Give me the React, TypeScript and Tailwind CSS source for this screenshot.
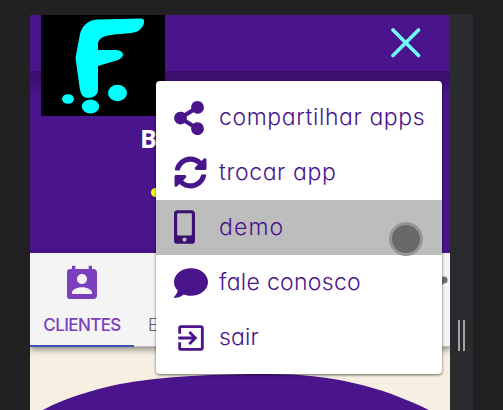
import type { ReactNode } from "react";
import { FaShareAlt, FaSyncAlt, FaMobileAlt, FaComment } from "react-icons/fa";
import { MdExitToApp, MdPermContactCalendar } from "react-icons/md";

function Logo() {
  return (
    <svg viewBox="0 0 124 101" className="block h-[101px] w-[124px] bg-black" fill="#00ffff">
      <path d="M56 4.5 Q80 4 99 3.5 C105 3 104 10 99 14.5 C95 19 84 18 70 20 C62 21 57 24 57 29 L57 35 L75 35 C84 36 84 42 77 45 L57 51 L57 75 C57 80 52 83 47 83 C41 83 39 78 38 68 L34.5 43 L39 19 C41 11 47 5 56 4.5Z" />
      <ellipse cx="27" cy="84" rx="6" ry="4.8" />
      <ellipse cx="49.5" cy="91.5" rx="8.7" ry="7" />
      <ellipse cx="76.5" cy="78" rx="9.5" ry="8.2" />
    </svg>
  );
}

function MenuItem({ icon, label, active, spacing }: { icon: ReactNode; label: string; active?: boolean; spacing: string }) {
  return (
    <div className={`flex h-[55px] items-center pl-[18px] text-[#4a148c] ${active ? "bg-[#bdbdbd]" : ""}`}>
      <span className="flex w-[45px] items-center">{icon}</span>
      <span className={`whitespace-nowrap text-[23px] leading-none font-light ${spacing}`}>{label}</span>
    </div>
  );
}

function Menu() {
  return (
    <div className="absolute top-[66px] left-[126px] h-[293px] w-[286px] rounded-[4px] bg-white pt-[9px] shadow-[0_1px_3px_rgba(0,0,0,0.6)]">
      <MenuItem icon={<FaShareAlt className="h-[34px] w-[30px]" />} label="compartilhar apps" spacing="tracking-[0.6px]" />
      <MenuItem icon={<FaSyncAlt className="size-[33px]" />} label="trocar app" spacing="tracking-[0.6px]" />
      <MenuItem active icon={<FaMobileAlt className="mb-[2px] h-[34px] w-[21px] text-[#3b1070]" />} label="demo" spacing="tracking-[1.1px]" />
      <MenuItem icon={<FaComment className="size-[34px]" />} label="fale conosco" spacing="tracking-[0.3px]" />
      <MenuItem icon={<MdExitToApp className="size-[34px]" />} label="sair" spacing="tracking-[0.1px]" />
      <div className="absolute top-[141px] left-[233px] size-[34px] rounded-full border-[3px] border-[#969696] bg-[#696969]" />
    </div>
  );
}

export default function App() {
  return (
    <div className="flex h-[410px] w-[503px] overflow-hidden bg-[#212122] pt-[15px] pl-[30px] font-['Inter','Open_Sans',sans-serif] [font-feature-settings:'cv11']">
      <main className="relative h-[395px] w-[420px] shrink-0 overflow-hidden bg-[#f7efe2]">
        <header className="flex h-[238px] flex-col bg-[#4a148c] bg-[linear-gradient(#4a148c_56px,#3a0f6c_56px,#3d1073_65px,#4a148c_82px)]">
          <div className="flex h-[101px] items-start justify-between pl-[11px]">
            <Logo />
            <svg viewBox="0 0 30 30" className="mt-[13px] mr-[29px] size-[30px]" stroke="#70ffff" strokeWidth="3.6" strokeLinecap="round">
              <path d="M2 2 27.5 27.5M27.5 2 2 27.5" />
            </svg>
          </div>
          <div className="pt-[9px] pl-[110px] font-['Open_Sans'] text-[25px] leading-[26px] font-bold text-white">B</div>
          <div className="mt-[37px] ml-[121px] size-[9px] rounded-full bg-[#fff700]" />
        </header>
        <nav className="flex h-[94px] border-b border-[#bdbdbd] bg-[#f4f4f4] text-[17px] font-medium shadow-[0_3px_6px_rgba(0,0,0,0.4)]">
          <div className="-mb-px flex w-[104px] shrink-0 flex-col items-center border-b-2 border-[#3f51b5] pt-[11px] text-[#7b3fbd]">
            <MdPermContactCalendar className="size-[40px]" />
            <span className="mt-[11px] leading-[20px] tracking-[-0.6px]">CLIENTES</span>
          </div>
          <span className="pt-[62px] pl-[14px] font-light leading-[20px] text-[#606060]">E</span>
          <svg viewBox="0 0 12 93" className="ml-auto h-[93px] w-[12px]" fill="#707070">
            <circle cx="6" cy="27" r="3.6" />
            <path d="M1 25h7v4L5 31l-3 3-1 4z" />
          </svg>
        </nav>
        <svg viewBox="0 0 420 38" className="mt-[25px] block h-[38px] w-[420px]" fill="#4a148c">
          <path d="M11 39 C33 27 58 19 90 12 C134 4 187 2 238 2 C302 2 350 14 401 39Z" />
        </svg>
        <Menu />
      </main>
      <aside className="-mt-px flex h-[396px] w-[23px] shrink-0 justify-center gap-[3px] bg-[#2a2b2e] pt-[306px]">
        <div className="h-[31px] w-[2px] bg-[#a3a3a3]" />
        <div className="h-[31px] w-[2px] bg-[#a3a3a3]" />
      </aside>
    </div>
  );
}
